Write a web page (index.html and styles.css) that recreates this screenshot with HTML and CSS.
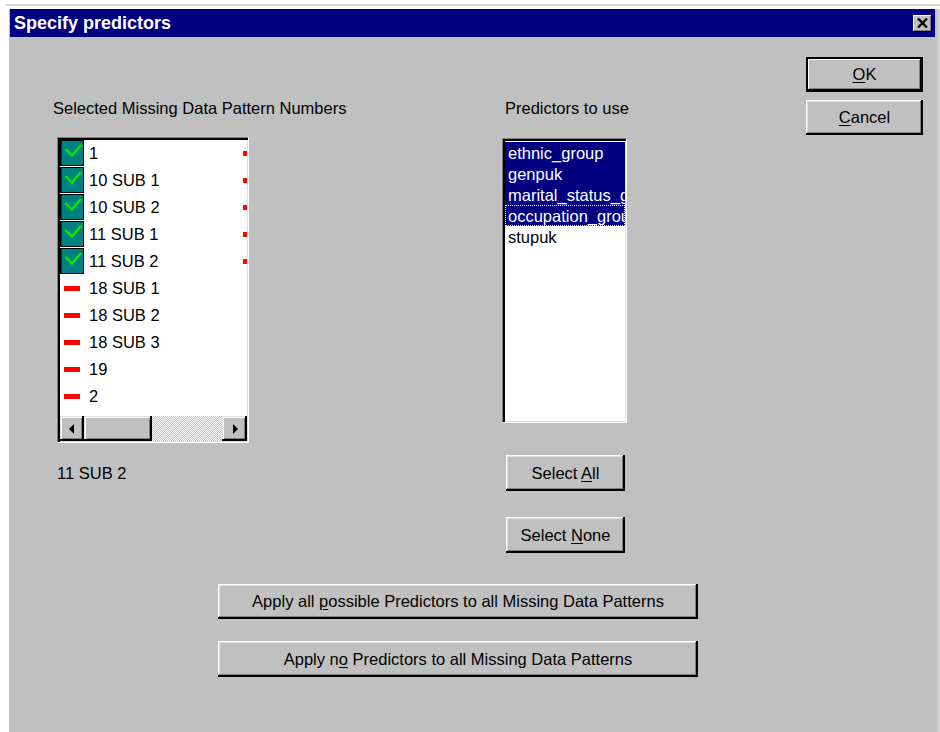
FILE: index.html
```html
<!DOCTYPE html>
<html lang="en">
<head>
<meta charset="utf-8">
<title>Specify predictors</title>
<link rel="stylesheet" href="styles.css">
</head>
<body>
<div class="window">
  <div class="titlebar">
    <span class="title">Specify predictors</span>
    <button class="close" type="button" aria-label="Close">
      <svg width="11" height="10" viewBox="0 0 11 10"><path d="M1 0.5L10 9.5M10 0.5L1 9.5" stroke="#000" stroke-width="2.4"/></svg>
    </button>
  </div>

  <div class="client">
    <div class="columns">
      <!-- missing data patterns -->
      <div class="col-patterns">
        <div class="label">Selected Missing Data Pattern Numbers</div>
        <div class="listbox patterns">
          <ul class="prows">
            <li class="prow"><span class="mark"><svg width="24" height="26" viewBox="0 0 24 26"><rect x="0.5" y="0.5" width="23" height="25" fill="#008080" stroke="#000"/><path d="M1 0V26" stroke="#000"/><path d="M5.5 9L12 15.5L21 5" fill="none" stroke="#00ee00" stroke-width="2.4"/></svg></span><span class="pname">1</span><span class="flag"></span></li>
            <li class="prow"><span class="mark"><svg width="24" height="26" viewBox="0 0 24 26"><rect x="0.5" y="0.5" width="23" height="25" fill="#008080" stroke="#000"/><path d="M1 0V26" stroke="#000"/><path d="M5.5 9L12 15.5L21 5" fill="none" stroke="#00ee00" stroke-width="2.4"/></svg></span><span class="pname">10 SUB 1</span><span class="flag"></span></li>
            <li class="prow"><span class="mark"><svg width="24" height="26" viewBox="0 0 24 26"><rect x="0.5" y="0.5" width="23" height="25" fill="#008080" stroke="#000"/><path d="M1 0V26" stroke="#000"/><path d="M5.5 9L12 15.5L21 5" fill="none" stroke="#00ee00" stroke-width="2.4"/></svg></span><span class="pname">10 SUB 2</span><span class="flag"></span></li>
            <li class="prow"><span class="mark"><svg width="24" height="26" viewBox="0 0 24 26"><rect x="0.5" y="0.5" width="23" height="25" fill="#008080" stroke="#000"/><path d="M1 0V26" stroke="#000"/><path d="M5.5 9L12 15.5L21 5" fill="none" stroke="#00ee00" stroke-width="2.4"/></svg></span><span class="pname">11 SUB 1</span><span class="flag"></span></li>
            <li class="prow"><span class="mark"><svg width="24" height="26" viewBox="0 0 24 26"><rect x="0.5" y="0.5" width="23" height="25" fill="#008080" stroke="#000"/><path d="M1 0V26" stroke="#000"/><path d="M5.5 9L12 15.5L21 5" fill="none" stroke="#00ee00" stroke-width="2.4"/></svg></span><span class="pname">11 SUB 2</span><span class="flag"></span></li>
            <li class="prow"><span class="mark"><span class="dash"></span></span><span class="pname">18 SUB 1</span></li>
            <li class="prow"><span class="mark"><span class="dash"></span></span><span class="pname">18 SUB 2</span></li>
            <li class="prow"><span class="mark"><span class="dash"></span></span><span class="pname">18 SUB 3</span></li>
            <li class="prow"><span class="mark"><span class="dash"></span></span><span class="pname">19</span></li>
            <li class="prow"><span class="mark"><span class="dash"></span></span><span class="pname">2</span></li>
          </ul>
          <div class="hscroll">
            <span class="sb-btn"><span class="arrow-left"></span></span>
            <span class="sb-thumb"></span>
            <span class="sb-track"></span>
            <span class="sb-btn"><span class="arrow-right"></span></span>
          </div>
        </div>
        <div class="current">11 SUB 2</div>
      </div>

      <!-- predictors -->
      <div class="col-predictors">
        <div class="label label-pred">Predictors to use</div>
        <div class="listbox predictors">
          <ul class="vrows">
            <li class="vrow sel">ethnic_group</li>
            <li class="vrow sel">genpuk</li>
            <li class="vrow sel">marital_status_group</li>
            <li class="vrow sel focus">occupation_group</li>
            <li class="vrow">stupuk</li>
          </ul>
        </div>
        <button class="btn btn-select" type="button">Select <u>A</u>ll</button>
        <button class="btn btn-select btn-none" type="button">Select <u>N</u>one</button>
      </div>

      <!-- dialog actions -->
      <div class="col-actions">
        <button class="btn btn-dlg default" type="button"><u>O</u>K</button>
        <button class="btn btn-dlg btn-cancel" type="button"><u>C</u>ancel</button>
      </div>
    </div>

    <div class="apply">
      <button class="btn btn-apply" type="button">Apply all <u>p</u>ossible Predictors to all Missing Data Patterns</button>
      <button class="btn btn-apply btn-apply-no" type="button">Apply n<u>o</u> Predictors to all Missing Data Patterns</button>
    </div>
  </div>
</div>
</body>
</html>
```

FILE: styles.css
```css
html, body {
  margin: 0;
  padding: 0;
}

body {
  width: 940px;
  height: 732px;
  overflow: hidden;
  background: #fff;
  font-family: "Liberation Sans", Arial, sans-serif;
  font-size: 16.5px;
  color: #000;
}

ul {
  margin: 0;
  padding: 0;
  list-style: none;
}

/* dialog frame */
.window {
  box-sizing: border-box;
  width: 934px;
  height: 728px;
  margin: 4px 0 0 6px;
  padding: 3px 5px 0 4px;
  background: #c0c0c0;
  border-top: 2px solid #d8d8d8;
  box-shadow: inset 3px 3px 0 #fff, inset -3px 0 0 #d0d0d0;
}

.titlebar {
  height: 28px;
  display: flex;
  align-items: center;
  justify-content: space-between;
  padding: 0 3px 0 4px;
  background: #000080;
}

.title {
  color: #fff;
  font-weight: bold;
  font-size: 18px;
  line-height: 28px;
}

.close {
  width: 19px;
  height: 17px;
  padding: 0;
  border: none;
  background: #c0c0c0;
  display: flex;
  align-items: center;
  justify-content: center;
  box-shadow: inset -1px -1px 0 #000, inset 1px 1px 0 #fff, inset -2px -2px 0 #808080;
}

/* client area */
.client {
  padding-left: 43px;
}

.columns {
  display: flex;
  align-items: flex-start;
}

.label {
  line-height: 20px;
  height: 20px;
  white-space: nowrap;
}

/* sunken list boxes */
.listbox {
  box-sizing: border-box;
  background: #fff;
  border: 1px solid;
  border-color: #808080 #fff #fff #808080;
  padding: 2px 1px 1px 2px;
  box-shadow: inset 2px 2px 0 #000, inset -1px -1px 0 #dfdfdf;
  overflow: hidden;
}

.col-patterns {
  width: 449px;
  padding-top: 61px;
}

.patterns {
  width: 192px;
  height: 306px;
  margin: 19px 0 0 4px;
  display: flex;
  flex-direction: column;
}

.prow {
  display: flex;
  align-items: flex-start;
  height: 27px;
}

.mark {
  width: 24px;
  height: 26px;
  flex: none;
  display: flex;
  align-items: center;
  justify-content: center;
}

.mark svg {
  display: block;
}

.dash {
  width: 16px;
  height: 5px;
  margin-top: 1px;
  background: #ff0000;
}

.pname {
  margin-left: 5px;
  line-height: 27px;
  white-space: nowrap;
}

.flag {
  width: 4px;
  height: 5px;
  margin: 11px 0 0 auto;
  background: #ff0000;
}

/* horizontal scroll bar */
.hscroll {
  margin-top: auto;
  height: 25px;
  display: flex;
}

.sb-btn,
.sb-thumb {
  box-sizing: border-box;
  height: 25px;
  background: #c0c0c0;
  display: flex;
  align-items: center;
  justify-content: center;
  box-shadow: inset -2px -2px 0 #000, inset 1px 1px 0 #dfdfdf, inset 2px 2px 0 #fff, inset -3px -3px 0 #808080;
}

.sb-btn {
  width: 24px;
}

.sb-btn:last-child {
  width: 25px;
}

.sb-thumb {
  width: 68px;
}

.sb-track {
  flex: 1;
  background: repeating-conic-gradient(#c0c0c0 0 25%, #fff 0 50%) 0 0 / 2px 2px;
}

.arrow-left {
  width: 0;
  height: 0;
  margin-left: -2px;
  border-right: 5px solid #000;
  border-top: 5px solid transparent;
  border-bottom: 5px solid transparent;
}

.arrow-right {
  width: 0;
  height: 0;
  margin-left: 1px;
  border-left: 5px solid #000;
  border-top: 5px solid transparent;
  border-bottom: 5px solid transparent;
}

.current {
  margin: 20px 0 0 4px;
  line-height: 20px;
}

/* predictors column */
.col-predictors {
  width: 125px;
  padding-top: 61px;
}

.label-pred {
  margin-left: 3px;
}

.predictors {
  width: 125px;
  height: 285px;
  margin-top: 20px;
}

.vrows {
  padding-top: 1px;
}

.vrow {
  box-sizing: border-box;
  height: 21px;
  line-height: 22px;
  padding-left: 3px;
  white-space: nowrap;
  overflow: hidden;
}

.vrow.sel {
  background: #000080;
  color: #fff;
}

.vrow.focus {
  outline: 1px dotted #ffff60;
  outline-offset: -1px;
}

/* push buttons */
.btn {
  display: block;
  box-sizing: border-box;
  padding: 0;
  border: none;
  background: #c0c0c0;
  font-family: "Liberation Sans", Arial, sans-serif;
  font-size: 16.5px;
  color: #000;
  text-align: center;
  box-shadow: inset -2px -2px 0 #000, inset 1px 1px 0 #fff, inset -3px -3px 0 #808080, inset 2px 2px 0 #dfdfdf;
}

.btn u {
  text-underline-offset: 2px;
}

.btn-select {
  width: 119px;
  height: 36px;
  margin: 32px 0 0 4px;
}

.btn-none {
  margin-top: 26px;
}

.col-actions {
  margin-left: 179px;
  padding-top: 20px;
}

.btn-dlg {
  width: 117px;
  height: 35px;
}

.btn-dlg.default {
  box-shadow: inset 0 0 0 2px #000, inset -3px -3px 0 #000, inset 3px 3px 0 #fff, inset -4px -4px 0 #808080;
}

.btn-cancel {
  margin-top: 8px;
}

/* bulk apply buttons */
.apply {
  margin: 31px 0 0 165px;
}

.btn-apply {
  width: 480px;
  height: 35px;
}

.btn-apply-no {
  height: 36px;
  margin-top: 22px;
}
```
